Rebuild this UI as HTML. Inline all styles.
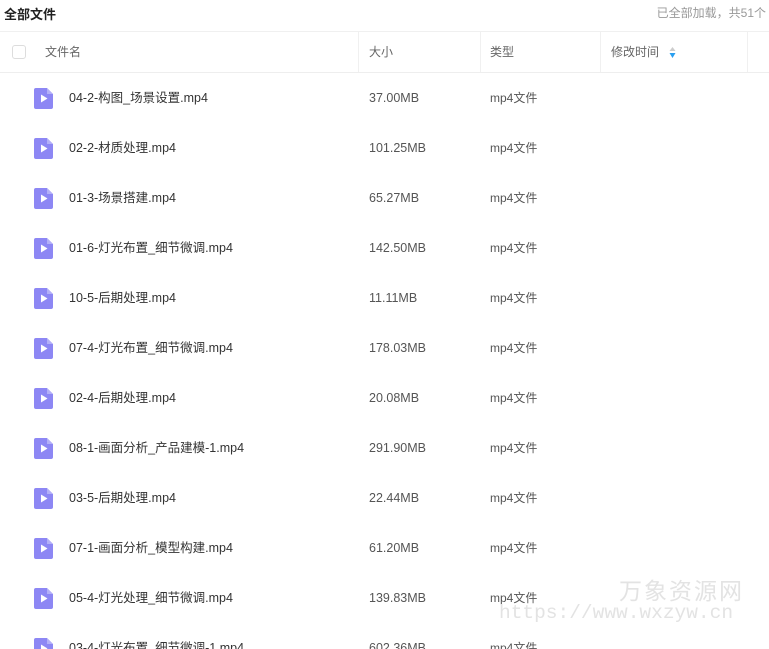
<!DOCTYPE html>
<html><head><meta charset="utf-8"><style>
*{margin:0;padding:0;box-sizing:border-box}
html,body{width:769px;height:649px;overflow:hidden}
body{background:#fff;font-family:"Liberation Sans","Noto Sans CJK SC",sans-serif;position:relative;color:#333}
.title{position:absolute;left:4px;top:4px;font-size:13px;font-weight:bold;color:#222}
.count{position:absolute;right:3px;top:4px;font-size:12px;color:#999}
.head{position:absolute;left:0;top:31px;width:769px;height:42px;border-top:1px solid #f0f0f0;border-bottom:1px solid #eee;font-size:12px;color:#666}
.head span{position:absolute;top:12px;line-height:16px}
.vl{position:absolute;top:0;width:1px;height:40px;background:#f0f0f0}
.cb{position:absolute;left:12px;top:13px;width:14px;height:14px;border:1px solid #ddd;border-radius:3px}
.row{position:absolute;left:0;width:769px;height:50px;font-size:12.5px;color:#333}
.row span{line-height:16px}
.row .ic{position:absolute;left:34px;top:-10px}
.row .n{position:absolute;left:69px;top:-8px}
.row .s{position:absolute;left:369px;top:-8px;color:#555}
.row .t{position:absolute;left:490px;top:-8px;color:#555;font-size:12px}
.wm1{position:absolute;left:619px;top:574px;font-size:23px;color:#e3e3e3;letter-spacing:2px;font-family:"Noto Sans CJK SC",sans-serif;line-height:30px}
.wm2{position:absolute;left:499px;top:602px;font-size:19.5px;color:#e3e3e3;font-family:"Liberation Mono",monospace;line-height:22px}
</style></head><body>
<div class="title">全部文件</div>
<div class="count">已全部加载，共51个</div>
<div class="head">
<div class="cb"></div>
<span style="left:45px">文件名</span>
<div class="vl" style="left:358px"></div><span style="left:369px">大小</span>
<div class="vl" style="left:480px"></div><span style="left:490px">类型</span>
<div class="vl" style="left:600px"></div><span style="left:611px">修改时间</span>
<svg style="position:absolute;left:669px;top:15px" width="7" height="11"><path d="M3.5 0L6.5 4H0.5Z" fill="#ccc"/><path d="M3.5 11L6.5 6H0.5Z" fill="#2a9ff0"/></svg>
<div class="vl" style="left:747px"></div>
</div>
<div id="rows"></div>
<script>
var d=[["04-2-构图_场景设置.mp4","37.00MB"],["02-2-材质处理.mp4","101.25MB"],["01-3-场景搭建.mp4","65.27MB"],["01-6-灯光布置_细节微调.mp4","142.50MB"],["10-5-后期处理.mp4","11.11MB"],["07-4-灯光布置_细节微调.mp4","178.03MB"],["02-4-后期处理.mp4","20.08MB"],["08-1-画面分析_产品建模-1.mp4","291.90MB"],["03-5-后期处理.mp4","22.44MB"],["07-1-画面分析_模型构建.mp4","61.20MB"],["05-4-灯光处理_细节微调.mp4","139.83MB"],["03-4-灯光布置_细节微调-1.mp4","602.36MB"]];
var h="";d.forEach(function(r,i){var y=98+i*50;h+='<div class="row" style="top:'+y+'px"><svg class="ic" width="19" height="21" viewBox="0 0 19 21"><path d="M2 0H13L19 6V19Q19 21 17 21H2Q0 21 0 19V2Q0 0 2 0Z" fill="#8d87f4"/><path d="M13 0V6H19Z" fill="#b3aff8"/><path d="M7 6.5L13.5 10.5L7 14.5Z" fill="#fff"/></svg><span class="n">'+r[0]+'</span><span class="s">'+r[1]+'</span><span class="t">mp4文件</span></div>'});
document.getElementById("rows").innerHTML=h;
</script>
<div class="wm1">万象资源网</div>
<div class="wm2">https://www.wxzyw.cn</div>
</body></html>
